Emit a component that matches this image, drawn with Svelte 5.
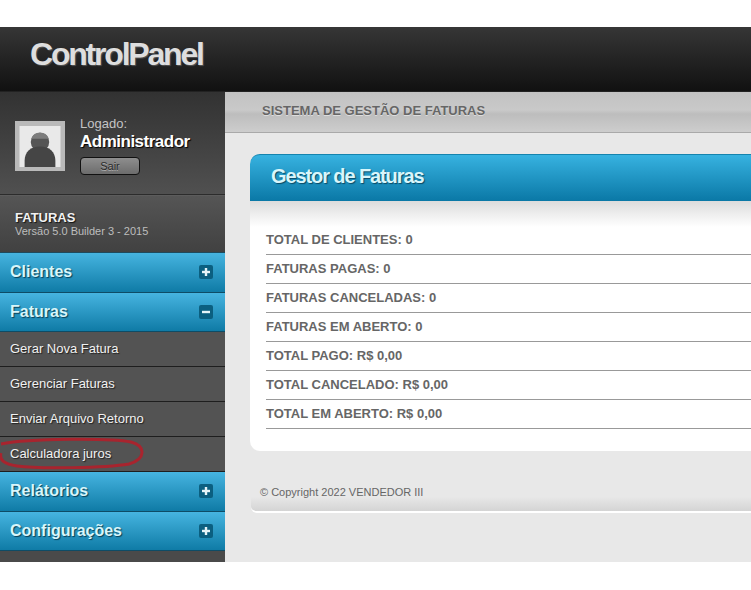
<script>
	const groupsTop = [{ name: "Clientes", open: false }, { name: "Faturas", open: true }];
	const groupsBottom = [{ name: "Relátorios", open: false }, { name: "Configurações", open: false }];
	const links = ["Gerar Nova Fatura", "Gerenciar Faturas", "Enviar Arquivo Retorno", "Calculadora juros"];
	const stats = [
		"TOTAL DE CLIENTES: 0",
		"FATURAS PAGAS: 0",
		"FATURAS CANCELADAS: 0",
		"FATURAS EM ABERTO: 0",
		"TOTAL PAGO: R$ 0,00",
		"TOTAL CANCELADO: R$ 0,00",
		"TOTAL EM ABERTO: R$ 0,00"
	];
</script>

{#snippet group(item)}
	<div class="group">
		<span>{item.name}</span>
		<svg class="toggle" width="14" height="14" viewBox="0 0 14 14">
			<rect width="14" height="14" rx="2" fill="#0b5f80" />
			<rect x="3" y="5.8" width="8" height="2.4" fill="#e6f4f8" />
			{#if !item.open}
				<rect x="5.8" y="3" width="2.4" height="8" fill="#e6f4f8" />
			{/if}
		</svg>
	</div>
{/snippet}

<div class="page">
	<header>
		<div class="logo">ControlPanel</div>
	</header>
	<div class="body">
		<aside>
			<div class="user">
				<div class="avatar">
					<svg width="40" height="40" viewBox="0 0 40 40">
						<rect width="40" height="40" fill="#e9e9e9" />
						<circle cx="20" cy="15.5" r="9" fill="#555" />
						<path d="M11.5 12.5a9 9 0 0 1 17 0z" fill="#7c7c7c" />
						<path d="M5 40v-6c0-9 6-14 15-14s15 5 15 14v6z" fill="#454545" />
					</svg>
				</div>
				<div class="who">
					<div class="logged">Logado:</div>
					<div class="admin">Administrador</div>
					<div class="logout">Sair</div>
				</div>
			</div>
			<div class="app">
				<div class="app-name">FATURAS</div>
				<div class="version">Versão 5.0 Builder 3 - 2015</div>
			</div>
			<nav>
				{#each groupsTop as item}
					{@render group(item)}
				{/each}
				{#each links as link}
					<div class="link">{link}</div>
				{/each}
				{#each groupsBottom as item}
					{@render group(item)}
				{/each}
				<svg class="circle" width="146" height="34" viewBox="0 0 146 34">
					<path d="M1 8C30 2 112 2 131 6c15 4 15 17-2 22-24 4-90 5-112 2C4 28-1 24 1 17" fill="none" stroke="#a8242e" stroke-width="3" />
				</svg>
			</nav>
		</aside>
		<main>
			<div class="crumb">SISTEMA DE GESTÃO DE FATURAS</div>
			<section class="card">
				<h1>Gestor de Faturas</h1>
				<div class="stats">
					{#each stats as stat}
						<div class="stat">{stat}</div>
					{/each}
				</div>
			</section>
			<footer>© Copyright 2022 VENDEDOR III</footer>
		</main>
	</div>
</div>

<style>
	:global(body) {
		background: #fff;
		overflow: hidden;
	}

	.page {
		padding-top: 27px;
		width: 751px;
		font-family: "Liberation Sans", Arial, sans-serif;
	}

	header {
		height: 64px;
		background: linear-gradient(#363636, #111);
		border-bottom: 1px solid #000;
		box-sizing: content-box;
		padding-left: 30px;
	}

	.logo {
		padding-top: 8px;
		font-size: 32px;
		line-height: 38px;
		font-weight: bold;
		letter-spacing: -2.2px;
		color: #dedede;
		text-shadow: 1px 1px 1px #555;
	}

	.body {
		display: flex;
		height: 470px;
		border-top: 1px solid #222;
		margin-top: -1px;
	}

	aside {
		width: 225px;
		flex: none;
		background: #4a4a4a;
	}

	.user {
		height: 103px;
		box-sizing: border-box;
		display: flex;
		gap: 15px;
		padding: 28px 0 0 15px;
		background: linear-gradient(#323232, #505050);
		border-bottom: 1px solid #2c2c2c;
	}

	.avatar {
		width: 50px;
		height: 50px;
		box-sizing: border-box;
		padding: 5px 4px 4px 4px;
		background: #b9b9b9;
		flex: none;
		margin-top: 1px;
	}

	.avatar svg {
		display: block;
		width: 42px;
		height: 41px;
	}

	.who {
		margin-top: -4px;
	}

	.logged {
		font-size: 13px;
		line-height: 15px;
		color: #c4c4c4;
	}

	.admin {
		font-size: 17px;
		line-height: 21px;
		font-weight: bold;
		letter-spacing: -0.5px;
		color: #fff;
		text-shadow: 1px 1px 1px #000;
	}

	.logout {
		width: 58px;
		height: 16px;
		margin-top: 5px;
		border: 1px solid #111;
		border-radius: 4px;
		background: linear-gradient(#8e8e8e, #6c6c6c);
		font-size: 11px;
		line-height: 16px;
		text-align: center;
		color: #2a2a2a;
		text-shadow: 0 1px 0 #aaa;
	}

	.app {
		height: 57px;
		box-sizing: border-box;
		padding: 15px 0 0 15px;
		background: linear-gradient(#555, #414141);
		border-top: 1px solid #5c5c5c;
	}

	.app-name {
		font-size: 13px;
		line-height: 14px;
		font-weight: bold;
		color: #f2f2f2;
		text-shadow: 1px 1px 1px #111;
	}

	.version {
		font-size: 11px;
		line-height: 13px;
		color: #bdbdbd;
	}

	nav {
		position: relative;
		border-top: 1px solid #1f4a5c;
	}

	.group {
		height: 39.5px;
		box-sizing: border-box;
		display: flex;
		align-items: center;
		justify-content: space-between;
		padding: 0 12px 0 10px;
		background: linear-gradient(#46b4e0, #0f7ba6);
		border-bottom: 1px solid #0e4c66;
		font-size: 16px;
		font-weight: bold;
		color: #d8f6fb;
		text-shadow: 1px 1px 1px #0a3f55;
	}

	.toggle {
		flex: none;
	}

	.link {
		height: 35px;
		box-sizing: border-box;
		padding: 8px 0 0 10px;
		background: #535353;
		border-bottom: 1px solid #1e1e1e;
		font-size: 13px;
		line-height: 18px;
		color: #f1f1f1;
		text-shadow: 1px 1px 1px #222;
	}

	.circle {
		position: absolute;
		left: 0;
		top: 183px;
	}

	main {
		flex: 1;
		min-width: 0;
		background: #e8e8e8;
		overflow: hidden;
	}

	.crumb {
		height: 41px;
		box-sizing: border-box;
		padding: 11px 0 0 37px;
		background: linear-gradient(#c2c2c2, #c9c9c9 45%, #bdbdbd 55%, #cdcdcd);
		border-bottom: 1px solid #a9a9a9;
		font-size: 13px;
		line-height: 16px;
		font-weight: bold;
		color: #666;
		text-shadow: 0 1px 0 #ddd;
	}

	.card {
		margin: 21px -20px 0 25px;
		background: #fff;
		border-radius: 10px;
		padding-bottom: 22px;
	}

	h1 {
		margin: 0;
		height: 47px;
		box-sizing: border-box;
		padding: 8px 0 0 21px;
		border-radius: 10px 0 0 0;
		background: linear-gradient(#37b2e0, #0a78a6);
		border-top: 1px solid #1583ad;
		font-size: 20px;
		line-height: 26px;
		font-weight: bold;
		letter-spacing: -1.1px;
		color: #d8f6fb;
		text-shadow: 1px 1px 1px #0a4a66;
	}

	.stats {
		padding: 24px 0 0 16px;
		background: linear-gradient(#dcdcdc, #fff 26px) no-repeat;
	}

	.stat {
		height: 29px;
		box-sizing: border-box;
		padding-top: 6px;
		border-bottom: 1px solid #999;
		font-size: 13px;
		line-height: 15px;
		font-weight: bold;
		color: #666;
	}

	.stat:first-child {
		height: 30px;
		padding-top: 7px;
	}

	footer {
		margin: 24px 0 0 26px;
		height: 38px;
		box-sizing: border-box;
		padding: 10px 0 0 9px;
		background: linear-gradient(#e8e8e8 60%, #d4d4d4);
		border-bottom: 2px solid #fff;
		border-radius: 0 0 0 6px;
		font-size: 11px;
		line-height: 14px;
		color: #666;
	}
</style>
